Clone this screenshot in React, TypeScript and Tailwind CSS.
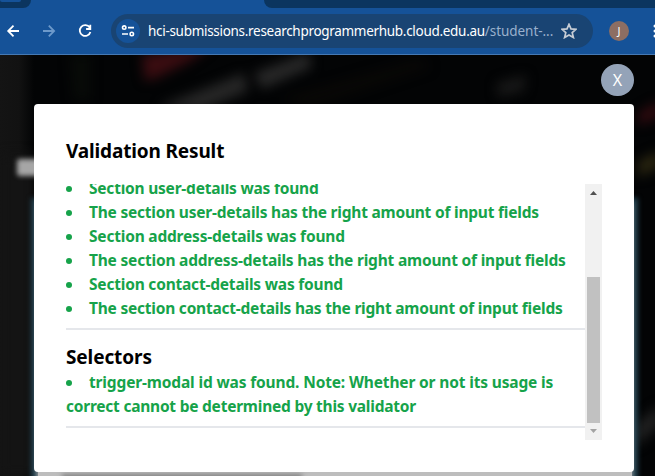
import React from "react";

const green = "text-[#16a34a]";

function Item({ children, spacing }: { children: React.ReactNode; spacing: string }) {
  return (
    <li className={`flex h-6 items-center whitespace-nowrap ${green}`}>
      <span className="mr-[17px] mt-0.5 h-1.5 w-1.5 shrink-0 rounded-full bg-[#16a34a]" />
      <span className={spacing}>{children}</span>
    </li>
  );
}

function Backdrop() {
  return (
    <svg className="absolute inset-0 h-full w-full" viewBox="0 0 655 421" preserveAspectRatio="none">
      <defs>
        <filter id="soft" filterUnits="userSpaceOnUse" x="-40" y="-40" width="740" height="500" colorInterpolationFilters="sRGB">
          <feGaussianBlur stdDeviation="6" />
        </filter>
        <filter id="edge" filterUnits="userSpaceOnUse" x="-40" y="-40" width="740" height="540" colorInterpolationFilters="sRGB">
          <feGaussianBlur stdDeviation="2.5" />
        </filter>
        <linearGradient id="side">
          <stop offset="0" stopColor="#141414" />
          <stop offset="0.55" stopColor="#121212" />
          <stop offset="1" stopColor="#030405" />
        </linearGradient>
      </defs>
      <rect width="655" height="421" fill="#030405" />
      <rect width="34" height="421" fill="url(#side)" />
      <rect y="100" width="34" height="321" fill="#141414" filter="url(#soft)" />
      <g filter="url(#soft)">
        <path d="M142 0 L212 -10 L190 6 L158 22 L145 26 Z" fill="#3a0d11" />
        <path d="M158 52 L244 18 L248 36 L200 56 Z" fill="#262626" />
        <path d="M254 18 L308 -2 L312 12 L262 34 Z" fill="#282828" />
        <path d="M497 28 L526 20 L524 36 L498 42 Z" fill="#181818" />
        <path d="M70 0 H90 V45 H74 Z" fill="#080b08" />
        <path d="M280 44 L420 4 L430 12 L310 52 Z" fill="#090806" />
        <path d="M638 106 L660 96 L660 112 L638 122 Z" fill="#2a2510" />
        <path d="M635 370 L660 350 L660 370 L635 392 Z" fill="#202020" />
        <path d="M638 58 L660 46 L660 62 L638 70 Z" fill="#300a0f" />
      </g>
      <rect x="17" y="104" width="30" height="17" rx="3" fill="#a6a6a6" filter="url(#edge)" />
      <rect x="34" y="146" width="601" height="320" fill="#a8a8a8" stroke="#22404e" strokeWidth="6" filter="url(#edge)" />
      <rect x="38" y="410" width="594" height="20" fill="#bdbdbd" />
      <path d="M62 422 H302" stroke="#777777" strokeWidth="5" filter="url(#edge)" />
    </svg>
  );
}

export default function App() {
  return (
    <div className="flex h-[476px] w-[655px] flex-col overflow-hidden bg-[#030405] font-['Noto_Sans',sans-serif]">
      <header className="flex h-[55px] flex-col border-b border-[#4579b4] bg-[#155298]">
        <div className="flex h-2 justify-between">
          <div className="w-[31px] overflow-hidden rounded-br-[10px] bg-[#0b355f]">
            <div className="h-0.5 w-[21px] rounded-b-full bg-[#155298]" />
          </div>
          <div className="w-[391px] rounded-bl-[10px] bg-[#0b355f]" />
        </div>
        <div className="mt-1.5 flex h-[34px] items-center">
          <svg className="ml-1.5 h-4 w-4 shrink-0" viewBox="0 0 16 16" fill="none" stroke="#fff" strokeWidth="1.8">
            <path d="M13 8H2.5M7.5 2.7 2.2 8l5.3 5.3" />
          </svg>
          <svg className="ml-5 h-4 w-4 shrink-0" viewBox="0 0 16 16" fill="none" stroke="#6d99ca" strokeWidth="1.8">
            <path d="M1 8h10.5M6.8 2.7 12.1 8l-5.3 5.3" />
          </svg>
          <svg className="ml-[19px] h-4 w-4 shrink-0" viewBox="0 0 16 16" fill="none" stroke="#fff" strokeWidth="1.8">
            <path d="M12.7 4.5A5.4 5.4 0 1 0 13.4 9M13.3 1.8V6H9.1" />
          </svg>
          <div className="ml-[18px] flex h-[34px] w-[482px] shrink-0 items-center rounded-full bg-[#194473] pl-[5px]">
            <div className="flex h-6 w-6 shrink-0 items-center justify-center rounded-full bg-[#155298]">
              <svg className="h-3.5 w-3.5" viewBox="0 0 14 14" fill="none" stroke="#fff" strokeWidth="1.6">
                <circle cx="3.2" cy="3.6" r="1.7" />
                <path d="M7 3.6h6M1 10h6" />
                <circle cx="10.8" cy="10" r="1.7" />
              </svg>
            </div>
            <div className="ml-2 w-[405px] shrink-0 whitespace-nowrap text-[13.5px] tracking-[-0.3px] text-white">
              hci-submissions.researchprogrammerhub.cloud.edu.au<span className="tracking-[-0.05px] text-[#9ab0cc]">/student-...</span>
            </div>
            <svg className="ml-2 h-4 w-4 shrink-0" viewBox="0 0 16 16" fill="none" stroke="#c7cdd5" strokeWidth="1.7">
              <path d="m8 1.3 2 4.6 5 .4-3.8 3.3 1.2 4.9L8 11.9l-4.4 2.6 1.2-4.9L1 6.3l5-.4Z" />
            </svg>
          </div>
          <div className="ml-4 flex h-5 w-5 shrink-0 items-center justify-center rounded-full bg-[#8d6e63] text-[11px] text-white">J</div>
          <svg className="ml-6 h-4 w-1 shrink-0" viewBox="0 0 4 16" fill="#fff">
            <circle cx="2" cy="3" r="1.5" />
            <circle cx="2" cy="8" r="1.5" />
            <circle cx="2" cy="13" r="1.5" />
          </svg>
        </div>
      </header>
      <main className="relative h-[421px]">
        <Backdrop />
        <div className="relative flex h-full flex-col px-[34px] pt-[9px]">
          <button className="flex h-8 w-[33px] items-center justify-center self-end rounded-full bg-[#94a3b8] text-base text-white mr-[-13px]">X</button>
          <section className="mt-2 h-[368px] w-[600px] rounded bg-white px-8 pt-8">
            <h1 className="h-[30px] whitespace-nowrap text-[19px] font-bold leading-[30px] tracking-[-0.15px] text-black">Validation Result</h1>
            <div className="mt-[18px] flex h-64 w-[536px]">
              <div className="h-64 w-[519px] overflow-hidden">
                <ul className="mt-[-8px] text-[15.5px] font-bold leading-6">
                  <Item spacing="tracking-[-0.22px]">Section user-details was found</Item>
                  <Item spacing="tracking-[-0.22px]">The section user-details has the right amount of input fields</Item>
                  <Item spacing="tracking-[-0.2px]">Section address-details was found</Item>
                  <Item spacing="tracking-[-0.2px]">The section address-details has the right amount of input fields</Item>
                  <Item spacing="tracking-[-0.2px]">Section contact-details was found</Item>
                  <Item spacing="tracking-[-0.22px]">The section contact-details has the right amount of input fields</Item>
                </ul>
                <hr className="mt-2 border-t-2 border-[#e5e7eb]" />
                <h2 className="mt-[13px] h-7 text-[19px] font-bold leading-7 tracking-[-0.1px] text-black">Selectors</h2>
                <ul className="mt-[-1px] text-[15.5px] font-bold leading-6">
                  <Item spacing="tracking-[-0.15px]">trigger-modal id was found. Note: Whether or not its usage is</Item>
                  <li className={`h-6 whitespace-nowrap tracking-[-0.23px] ${green}`}>correct cannot be determined by this validator</li>
                </ul>
                <hr className="mt-2 border-t-2 border-[#e5e7eb]" />
              </div>
              <div className="flex h-64 w-[17px] flex-col items-center bg-[#f1f1f1]">
                <svg className="h-[17px] w-[17px]" viewBox="0 0 17 17" fill="#505050"><path d="M5 11h7L8.5 7Z" /></svg>
                <div className="mt-[76px] h-[146px] w-[13px] bg-[#c1c1c1]" />
                <svg className="h-[17px] w-[17px]" viewBox="0 0 17 17" fill="#a3a3a3"><path d="M5 6h7l-3.5 4Z" /></svg>
              </div>
            </div>
          </section>
        </div>
      </main>
    </div>
  );
}
